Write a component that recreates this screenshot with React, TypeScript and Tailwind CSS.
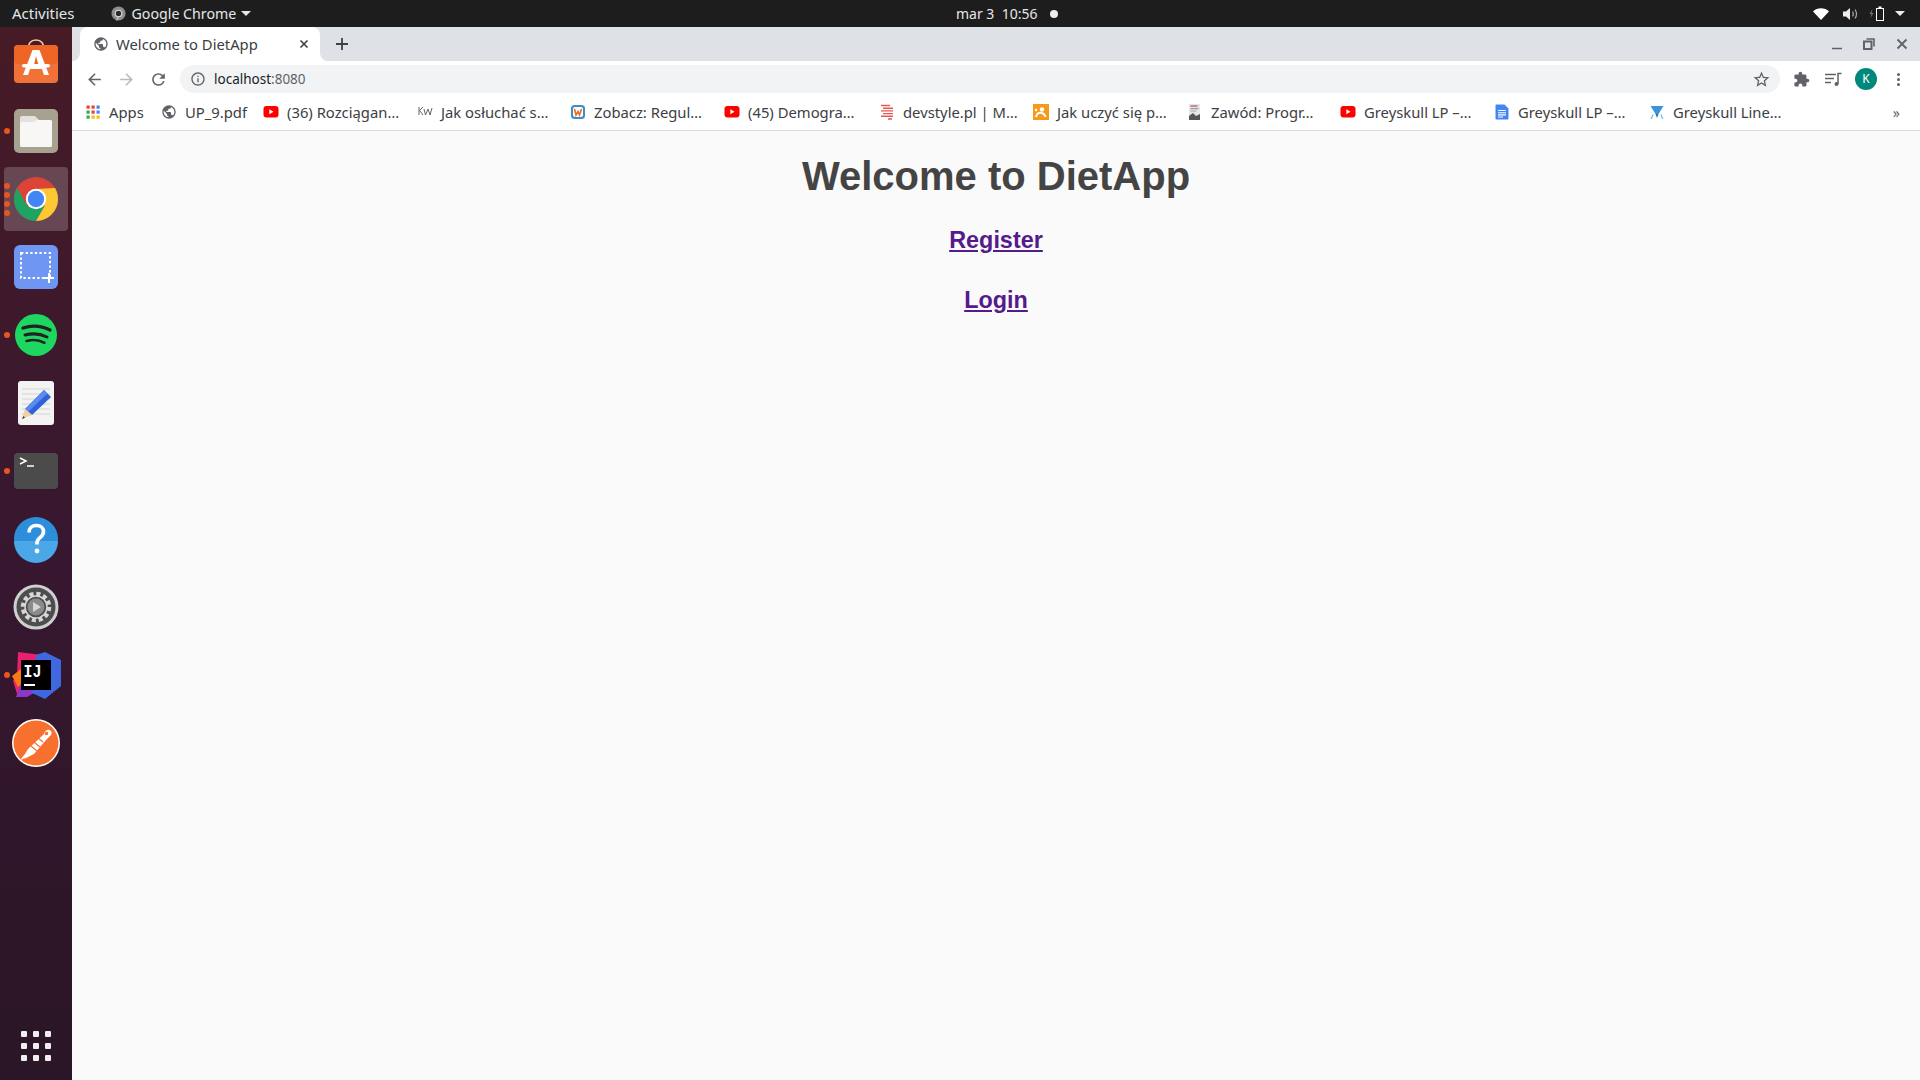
import React from "react";

const GLOBE = "M12 2C6.48 2 2 6.48 2 12s4.48 10 10 10 10-4.48 10-10S17.52 2 12 2zm-1 17.93c-3.95-.49-7-3.85-7-7.93 0-.62.08-1.21.21-1.79L9 15v1c0 1.1.9 2 2 2v1.93zm6.9-2.54c-.26-.81-1-1.39-1.9-1.39h-1v-3c0-.55-.45-1-1-1H8v-2h2c.55 0 1-.45 1-1V7h2c1.1 0 2-.9 2-2v-.41c2.93 1.19 5 4.06 5 7.41 0 2.08-.8 3.97-2.1 5.39z";

function Mat({ d, size = 20, color = "#5f6368", flip = false }: { d: string; size?: number; color?: string; flip?: boolean }) {
  return (
    <svg width={size} height={size} viewBox="0 0 24 24" fill={color} className={flip ? "shrink-0 -scale-x-100" : "shrink-0"}>
      <path d={d} />
    </svg>
  );
}

function Globe({ size = 16 }: { size?: number }) {
  return <Mat d={GLOBE} size={size} />;
}

function Yt() {
  return (
    <svg width="16" height="16" viewBox="0 0 16 16" className="shrink-0">
      <rect x="0.5" y="2" width="15" height="11.5" rx="3" fill="#f00" />
      <path d="M6.3 5.3v5l4.2-2.5z" fill="#fff" />
    </svg>
  );
}

function AppsIcon() {
  const cols = ["#ea4335", "#fbbc05", "#34a853", "#4285f4"];
  const map = [0, 0, 3, 2, 0, 3, 2, 1, 1];
  return (
    <svg width="16" height="16" viewBox="0 0 16 16" className="shrink-0">
      {map.map((c, i) => (
        <rect key={i} x={1.5 + (i % 3) * 5} y={1.5 + Math.floor(i / 3) * 5} width="3.2" height="3.2" fill={cols[c]} />
      ))}
    </svg>
  );
}

function KW() {
  return (
    <svg width="16" height="16" viewBox="0 0 16 16" className="shrink-0" fill="none" stroke="#666" strokeWidth="1">
      <path d="M2 3v8M2 7l4-4M3 7l3 4M7 5l1.5 6L11 5l2 6 2-7" />
    </svg>
  );
}

function Zob() {
  return (
    <svg width="16" height="16" viewBox="0 0 16 16" className="shrink-0">
      <rect x="1" y="1" width="14" height="14" rx="3.5" fill="#3d8fc8" />
      <rect x="3" y="3" width="10" height="10" rx="2" fill="#fff" />
      <path d="M4.5 5l1.5 6 2-3.5 1.5 3.5 2-6" fill="none" stroke="#ee6a1f" strokeWidth="1.6" />
    </svg>
  );
}

function Dev() {
  return (
    <svg width="16" height="16" viewBox="0 0 16 16" className="shrink-0" stroke="#e8574f" strokeWidth="1.4">
      <path d="M2 1.5h9M4 4.2h10M2 6.9h12M4 9.6h10M2 12.3h12M9 15h4" />
    </svg>
  );
}

function Rss() {
  return (
    <svg width="16" height="16" viewBox="0 0 16 16" className="shrink-0">
      <rect width="16" height="16" fill="#f79a1c" />
      <circle cx="9" cy="5.5" r="2.2" fill="#fff" />
      <path d="M3 13c1-4 3-5 6-4 2 .6 3 2 3.5 4" fill="none" stroke="#fff" strokeWidth="2" />
      <circle cx="3" cy="6" r="1.2" fill="#fff" />
    </svg>
  );
}

function Book() {
  return (
    <svg width="16" height="16" viewBox="0 0 16 16" className="shrink-0">
      <rect x="2" width="11" height="16" fill="#e6e6e6" />
      <rect x="3.5" y="1.5" width="7" height="1" fill="#a33" />
      <rect x="3.5" y="4" width="8" height="1.2" fill="#999" />
      <rect x="3.5" y="6.5" width="6" height="1" fill="#aaa" />
      <path d="M2 16v-4l4-3 3 3 4-2v6z" fill="#555" />
    </svg>
  );
}

function Doc() {
  return (
    <svg width="16" height="16" viewBox="0 0 16 16" className="shrink-0">
      <path d="M1.5 1.5a1 1 0 0 1 1-1h8l4 4v10a1 1 0 0 1-1 1h-11a1 1 0 0 1-1-1z" fill="#4285f4" />
      <path d="M4 6.5h8M4 8.7h8M4 10.9h8M4 13h5" stroke="#fff" strokeWidth="1.1" />
    </svg>
  );
}

function Lift() {
  return (
    <svg width="16" height="16" viewBox="0 0 16 16" className="shrink-0">
      <path d="M1.5 2h13l-5 8H6.5z" fill="#3a95d8" />
      <path d="M6.5 10h3L8 14z" fill="#2b6ea8" />
      <path d="M1.5 15l2-5 1 1-1.5 4z" fill="#7fc0ea" />
      <path d="M14.5 15l-2-5-1 1 1.5 4z" fill="#7fc0ea" />
    </svg>
  );
}

const bookmarks: { w: string; icon: React.ReactNode; t: string }[] = [
  { w: "w-[76px]", icon: <AppsIcon />, t: "Apps" },
  { w: "w-[102px]", icon: <Globe />, t: "UP_9.pdf" },
  { w: "w-[154px]", icon: <Yt />, t: "(36) Rozciągan…" },
  { w: "w-[153px]", icon: <KW />, t: "Jak osłuchać s…" },
  { w: "w-[154px]", icon: <Zob />, t: "Zobacz: Regul…" },
  { w: "w-[155px]", icon: <Yt />, t: "(45) Demogra…" },
  { w: "w-[154px]", icon: <Dev />, t: "devstyle.pl | M…" },
  { w: "w-[154px]", icon: <Rss />, t: "Jak uczyć się p…" },
  { w: "w-[153px]", icon: <Book />, t: "Zawód: Progr…" },
  { w: "w-[154px]", icon: <Yt />, t: "Greyskull LP –…" },
  { w: "w-[155px]", icon: <Doc />, t: "Greyskull LP –…" },
  { w: "w-[154px]", icon: <Lift />, t: "Greyskull Line…" },
];

function DockItem({ dots = 0, active = false, children }: { dots?: number; active?: boolean; children: React.ReactNode }) {
  return (
    <div className="relative flex h-[68px] w-[72px] items-center justify-center">
      {active && <div className="absolute left-1 top-0.5 h-16 w-16 rounded bg-white/20" />}
      {dots > 0 && (
        <div className="absolute left-1 top-0 flex h-full flex-col justify-center gap-[3px]">
          {Array.from({ length: dots }).map((_, i) => (
            <div key={i} className="h-1.5 w-1.5 rounded-full bg-[#e95420]" />
          ))}
        </div>
      )}
      <div className="relative">{children}</div>
    </div>
  );
}

const Ico = ({ children }: { children: React.ReactNode }) => (
  <svg width="56" height="56" viewBox="0 0 56 56" className="block">
    {children}
  </svg>
);

function Dock() {
  return (
    <aside className="flex h-full w-[72px] shrink-0 flex-col bg-gradient-to-b from-[#471b25] via-[#371730] to-[#2a1626] pt-[2px]">
      <DockItem>
        <Ico>
          <path d="M20 15c0-8 4-10 8-10s8 2 8 10" fill="none" stroke="#f0c9a8" strokeWidth="1.6" />
          <rect x="6" y="10" width="44" height="38" rx="4" fill="#f07238" />
          <rect x="6" y="10" width="44" height="19" rx="4" fill="#ee6525" />
          <path d="M24.5 15h7L41 40h-5l-2-6H22l-2 6h-5z M26 30h4.5L28 21z" fill="#fff" fillRule="evenodd" />
          <rect x="14" y="29" width="28" height="3.5" rx="1.7" fill="#fff" />
        </Ico>
      </DockItem>
      <DockItem dots={1}>
        <Ico>
          <rect x="6" y="6" width="44" height="44" rx="5" fill="#a7a28f" />
          <path d="M12 15a2 2 0 0 1 2-2h13l4 4h11a2 2 0 0 1 2 2v23a2 2 0 0 1-2 2H14a2 2 0 0 1-2-2z" fill="#e4e2dc" />
          <path d="M12 21a2 2 0 0 1 2-2h12l3-2h13a2 2 0 0 1 2 2v23a2 2 0 0 1-2 2H14a2 2 0 0 1-2-2z" fill="#f8f7f5" />
        </Ico>
      </DockItem>
      <DockItem dots={4} active>
        <Ico>
          <g transform="translate(4 4)">
            <circle cx="24" cy="24" r="22" fill="#db4437" />
            <path d="M4.950 13A22 22 0 0 0 24 46l8.660-15H15.340z" fill="#1ea362" />
            <path d="M43.050 13A22 22 0 0 1 24 46l8.660-15L24 14z" fill="#fcc934" />
            <circle cx="24" cy="24" r="10.200" fill="#fff" />
            <circle cx="24" cy="24" r="8.200" fill="#4285f4" />
          </g>
        </Ico>
      </DockItem>
      <DockItem>
        <Ico>
          <rect x="6" y="6" width="44" height="44" rx="6" fill="#6f96f2" />
          <rect x="13" y="14" width="29" height="25" fill="none" stroke="#fff" strokeWidth="2" strokeDasharray="2.4 2.2" />
          <path d="M41 34v10M36 39h10" stroke="#fff" strokeWidth="2" />
        </Ico>
      </DockItem>
      <DockItem dots={1}>
        <Ico>
          <circle cx="28" cy="28" r="21" fill="#1ed760" />
          <path d="M15 21c9-3 19-2 27 2" fill="none" stroke="#222" strokeWidth="3.4" strokeLinecap="round" />
          <path d="M17 28c8-2 16-1 22 2" fill="none" stroke="#222" strokeWidth="3" strokeLinecap="round" />
          <path d="M18.5 34c6-1.500 13-1 18 1.800" fill="none" stroke="#222" strokeWidth="2.5" strokeLinecap="round" />
        </Ico>
      </DockItem>
      <DockItem>
        <Ico>
          <rect x="10" y="6" width="36" height="44" rx="3" fill="#f3f3f3" />
          <path d="M14 14h28M14 19h28M14 24h28M14 29h28M14 34h28M14 39h28" stroke="#d3d3d3" strokeWidth="1" />
          <path d="M36 15l7 7-19 18-7-6z" fill="#2f62d8" />
          <path d="M36 15l3.500 3.500-19 18-3-2.500z" fill="#5b8bf0" />
          <path d="M17 34l7 6-10 4z" fill="#f1cfa3" />
          <path d="M15.500 41l-1.500 3 3-1.200z" fill="#333" />
        </Ico>
      </DockItem>
      <DockItem dots={1}>
        <Ico>
          <rect x="6" y="10" width="44" height="36" rx="4" fill="#4b4b4b" />
          <path d="M12 15l6 3-6 3" fill="none" stroke="#fff" strokeWidth="1.500" />
          <path d="M19 23h7" stroke="#fff" strokeWidth="1.500" />
        </Ico>
      </DockItem>
      <DockItem>
        <Ico>
          <circle cx="28" cy="28" r="22" fill="#2d8fdc" />
          <path d="M6 30a22 22 0 0 0 44 0z" fill="#4aa7e8" />
          <path d="M21 21.500c0-4.500 3-7 7.500-7s7 2.700 7 6.200c0 6-6.500 5.500-6.500 11.300v1.500" fill="none" stroke="#fff" strokeWidth="3.600" />
          <circle cx="29" cy="40" r="2.400" fill="#fff" />
        </Ico>
      </DockItem>
      <DockItem>
        <Ico>
          <circle cx="28" cy="28" r="21" fill="#4d4d4d" stroke="#cfcfcf" strokeWidth="3" />
          <circle cx="28" cy="28" r="13" fill="none" stroke="#d6d6d6" strokeWidth="4.500" strokeDasharray="4 2.800" />
          <circle cx="28" cy="28" r="11" fill="none" stroke="#d6d6d6" strokeWidth="1.500" />
          <circle cx="28" cy="28" r="8.500" fill="#8a8a8a" />
          <path d="M25 23v10l8-5z" fill="#d6d6d6" />
        </Ico>
      </DockItem>
      <DockItem dots={1}>
        <Ico>
          <path d="M10 5l24 3 4 30-28 12-5-16 4-6z" fill="#e8206e" />
          <path d="M4 29l9-7 6 12-9 6z" fill="#f97a12" />
          <path d="M8 50l5-14 20 6-14 8z" fill="#8f35c8" />
          <path d="M37 5l16 8v26L37 52 24 46l4-38z" fill="#3f67e0" />
          <rect x="13" y="13" width="30" height="30" fill="#000" />
          <text x="15.500" y="30" fill="#fff" fontFamily="Liberation Mono" fontWeight="700" fontSize="19" textLength="18" lengthAdjust="spacingAndGlyphs">IJ</text>
          <rect x="16" y="37" width="11" height="2" fill="#fff" />
        </Ico>
      </DockItem>
      <DockItem>
        <Ico>
          <circle cx="28" cy="28" r="24" fill="#fff" />
          <circle cx="28" cy="28" r="22.500" fill="#f7702e" />
          <path d="M12 45l6-2 8-4 12-14 5-5c2-3-1-6-4-5-2 1-3 3-3 4L20 34l-3 5z" fill="#fff" />
          <path d="M23 31l6 5M26 27l6 5M30 23l5 4" stroke="#f7702e" strokeWidth="1.200" />
          <circle cx="38.500" cy="18.500" r="1.800" fill="#f7702e" />
        </Ico>
      </DockItem>
      <div className="flex-1" />
      <div className="mb-[19px] ml-[21px] grid w-[30px] grid-cols-3 gap-1.5">
        {Array.from({ length: 9 }).map((_, i) => (
          <div key={i} className="h-1.5 w-1.5 rounded-[1px] bg-[#f0eeee]" />
        ))}
      </div>
    </aside>
  );
}

function TopBar() {
  return (
    <header className="relative flex h-[27px] shrink-0 items-center bg-[#1d1d1d] font-['Noto_Sans',sans-serif] text-[14px] text-[#e6e6e6]">
      <span className="ml-3 text-[15px]">Activities</span>
      <svg width="15" height="15" viewBox="0 0 16 16" className="ml-9">
        <circle cx="8" cy="8" r="7.500" fill="#8d8d8d" />
        <circle cx="8" cy="8" r="3.500" fill="#2a2a2a" stroke="#ddd" strokeWidth="1.200" />
        <path d="M8 11.500 6 15.500" stroke="#ddd" strokeWidth="1" />
      </svg>
      <span className="ml-[6px] text-[14.200px]">Google Chrome</span>
      <div className="ml-[5px] h-0 w-0 border-x-[5px] border-t-[5px] border-x-transparent border-t-[#e6e6e6]" />
      <div className="absolute left-[956px] top-0 flex h-full items-center">
        <span className="whitespace-pre">mar 3  10:56</span>
        <div className="ml-[13px] h-2 w-2 rounded-full bg-[#eee]" />
      </div>
      <div className="ml-auto flex items-center pr-[15px]">
        <svg width="16" height="12" viewBox="0 0 16 12"><path d="M0 3.500C4 -.8 12 -.8 16 3.500L8 12z" fill="#fff" /></svg>
        <svg width="16" height="14" viewBox="0 0 16 14" fill="none" className="ml-[14px]">
          <path d="M0 4.500h3L7 1v12L3 9.500H0z" fill="#eee" />
          <path d="M9.500 4.500c1 1.500 1 3.500 0 5M12 2.500c2 3 2 6 0 9" stroke="#aaa" strokeWidth="1.200" />
        </svg>
        <svg width="16" height="15" viewBox="0 0 16 15" fill="none" className="ml-[10px]">
          <path d="M3.500 3 0.500 8h2L1.500 12l3-5h-2z" fill="#777" />
          <rect x="7.500" y="2.500" width="7" height="12" stroke="#fff" />
          <rect x="9.500" y="0.500" width="3" height="1.500" fill="#fff" />
        </svg>
        <div className="ml-[10px] h-0 w-0 border-x-[5px] border-t-[5px] border-x-transparent border-t-[#eee]" />
      </div>
    </header>
  );
}

function TabStrip() {
  return (
    <div className="flex h-[34px] shrink-0 items-end bg-[#dee1e6] pl-2 font-['Noto_Sans',sans-serif]">
      <div className="relative flex h-[34px] w-60 items-center rounded-t-lg bg-white pl-[13px] pr-[10px] text-[14.800px] text-[#3c4043]">
        <div className="absolute -left-2 bottom-0 h-2 w-2 bg-white"><div className="h-full w-full rounded-br-lg bg-[#dee1e6]" /></div>
        <div className="absolute -right-2 bottom-0 h-2 w-2 bg-white"><div className="h-full w-full rounded-bl-lg bg-[#dee1e6]" /></div>
        <Globe />
        <span className="ml-[7px] flex-1 whitespace-nowrap">Welcome to DietApp</span>
        <svg width="12" height="12" viewBox="0 0 12 12" stroke="#3c4043" strokeWidth="1.600"><path d="M2.500 2.500l7 7M9.500 2.500l-7 7" /></svg>
      </div>
      <div className="ml-3 flex h-[34px] w-[20px] items-center justify-center">
        <svg width="14" height="14" viewBox="0 0 14 14" stroke="#3c4043" strokeWidth="1.800"><path d="M7 1v12M1 7h12" /></svg>
      </div>
      <div className="ml-auto flex h-[34px] items-center pr-[12px]">
        <svg width="12" height="12" viewBox="0 0 12 12" stroke="#5f6368" strokeWidth="1.500"><path d="M1 10.500h10" /></svg>
        <svg width="12" height="12" viewBox="0 0 12 12" fill="none" stroke="#5f6368" strokeWidth="1.600" className="ml-5"><path d="M3.500 1h7.500v7.500" /><rect x="1" y="3.500" width="7.500" height="7.500" strokeWidth="2" /></svg>
        <svg width="12" height="12" viewBox="0 0 12 12" stroke="#5f6368" strokeWidth="1.800" className="ml-[21px]"><path d="M1.500 1.500l9 9M10.500 1.500l-9 9" /></svg>
      </div>
    </div>
  );
}

function Toolbar() {
  return (
    <div className="flex h-[36px] shrink-0 items-center bg-white pl-[12px] font-['Noto_Sans',sans-serif] text-[13.500px]">
      <div className="flex w-[96px] items-center">
        <div className="flex w-5 justify-center"><Mat d="M20 11H7.830l5.590-5.590L12 4l-8 8 8 8 1.410-1.410L7.830 13H20v-2z" size={19} /></div>
        <div className="ml-3 flex w-5 justify-center"><Mat flip d="M20 11H7.830l5.590-5.590L12 4l-8 8 8 8 1.410-1.410L7.830 13H20v-2z" size={19} color="#b9bbbe" /></div>
        <div className="ml-3 flex w-5 justify-center"><Mat d="M17.650 6.350A7.958 7.958 0 0 0 12 4c-4.420 0-7.990 3.580-7.990 8s3.570 8 7.990 8c3.730 0 6.840-2.550 7.730-6h-2.080A5.990 5.990 0 0 1 12 18c-3.310 0-6-2.690-6-6s2.690-6 6-6c1.660 0 3.140.690 4.220 1.780L13 11h7V4l-2.350 2.350z" size={19} /></div>
      </div>
      <div className="flex h-7 w-[1600px] items-center rounded-full bg-[#f1f3f4] pl-[10px] pr-[9px]">
        <Mat d="M11 7h2v2h-2zm0 4h2v6h-2zm1-9C6.480 2 2 6.480 2 12s4.480 10 10 10 10-4.480 10-10S17.520 2 12 2zm0 18c-4.410 0-8-3.590-8-8s3.590-8 8-8 8 3.590 8 8-3.590 8-8 8z" size={16} />
        <span className="ml-[8px] text-[#202124]">localhost<span className="text-[#5f6368]">:8080</span></span>
        <div className="ml-auto"><Mat d="M22 9.240l-7.190-.620L12 2 9.190 8.630 2 9.240l5.460 4.730L5.820 21 12 17.270 18.180 21l-1.630-7.030L22 9.240zM12 15.400l-3.760 2.270 1-4.280-3.320-2.880 4.380-.380L12 6.100l1.710 4.040 4.380.380-3.320 2.880 1 4.280L12 15.400z" size={19} /></div>
      </div>
      <div className="ml-[13px] flex items-center">
        <Mat d="M20.500 11H19V7c0-1.100-.900-2-2-2h-4V3.500C13 2.120 11.880 1 10.500 1S8 2.120 8 3.500V5H4c-1.100 0-1.990.900-1.990 2v3.800H3.500c1.490 0 2.700 1.210 2.700 2.700s-1.210 2.700-2.700 2.700H2V20c0 1.100.900 2 2 2h3.800v-1.500c0-1.490 1.210-2.700 2.700-2.700 1.490 0 2.700 1.210 2.700 2.700V22H17c1.100 0 2-.900 2-2v-4h1.500c1.380 0 2.500-1.120 2.500-2.500S21.880 11 20.500 11z" size={17} />
        <svg width="17" height="15" viewBox="0 0 17 15" className="ml-[15px]" fill="none" stroke="#5f6368" strokeWidth="1.500">
          <path d="M0 2.500h11M0 6.500h9M0 10.500h6" />
          <path d="M13 12V1.500h3.500" />
          <circle cx="11.500" cy="12" r="2" fill="#5f6368" stroke="none" />
        </svg>
        <div className="ml-[13px] flex h-[22px] w-[22px] items-center justify-center rounded-full bg-[#00897b] text-[12px] text-white">K</div>
        <div className="ml-[20px] flex flex-col gap-[2px]">
          <div className="h-[3px] w-[3px] rounded-full bg-[#5f6368]" />
          <div className="h-[3px] w-[3px] rounded-full bg-[#5f6368]" />
          <div className="h-[3px] w-[3px] rounded-full bg-[#5f6368]" />
        </div>
      </div>
    </div>
  );
}

function Bookmarks() {
  return (
    <div className="flex h-[34px] shrink-0 items-center border-b border-[#d9dbdd] bg-white pb-[3px] pl-[13px] font-['Noto_Sans',sans-serif] text-[14.800px] text-[#3c4043]">
      {bookmarks.map((b, i) => (
        <div key={i} className={`flex items-center gap-[8px] whitespace-nowrap ${b.w}`}>
          {b.icon}
          <span>{b.t}</span>
        </div>
      ))}
      <span className="ml-auto pr-[20px] text-[14px] text-[#5f6368]">»</span>
    </div>
  );
}

export default function App() {
  return (
    <div className="flex h-[1080px] w-[1920px] flex-col overflow-hidden">
      <TopBar />
      <div className="flex min-h-0 flex-1">
        <Dock />
        <div className="flex min-w-0 flex-1 flex-col">
          <TabStrip />
          <Toolbar />
          <Bookmarks />
          <main className="flex-1 bg-[#fafafa] pt-[22px] text-center font-['Liberation_Sans',Arial,sans-serif] font-bold">
            <h1 className="text-[40px] leading-[46px] text-[#444444]">Welcome to DietApp</h1>
            <p className="mt-[28px] text-[23.400px] leading-[27px]"><a href="#" className="text-[#551a8b] underline">Register</a></p>
            <p className="mt-[33px] text-[23.400px] leading-[27px]"><a href="#" className="text-[#551a8b] underline">Login</a></p>
          </main>
        </div>
      </div>
    </div>
  );
}
